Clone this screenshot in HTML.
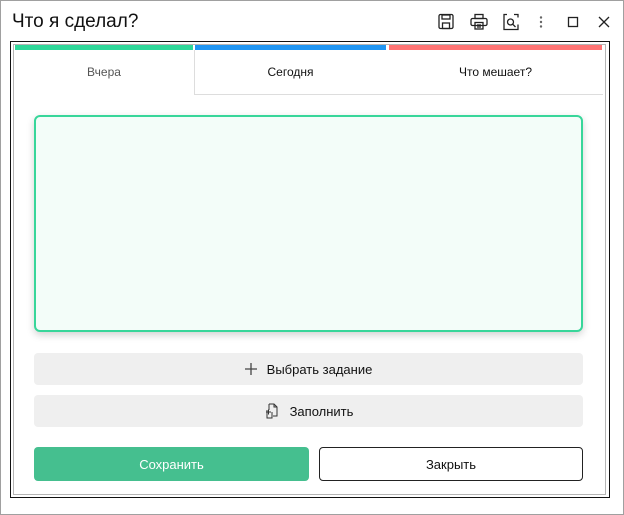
<!DOCTYPE html>
<html><head><meta charset="utf-8"><style>
*{box-sizing:border-box;margin:0;padding:0}
body{width:624px;height:515px;background:#fff;font-family:"Liberation Sans","DejaVu Sans",sans-serif;position:relative;overflow:hidden}
.abs{position:absolute}
.win{left:0;top:0;width:624px;height:515px;border:1px solid #a0a0a0}
.title{left:12px;top:11px;font-size:19px;color:#111}
.outer{left:10px;top:41px;width:600px;height:457px;border:1px solid #111}
.inner{left:13px;top:44px;width:593px;height:451px;border:1px solid #b5b5b5}
.bar{top:45px;height:5px}
.tab{top:50px;height:44px;font-size:12px;display:flex;align-items:center;justify-content:center;color:#111}
.ta{left:34px;top:115px;width:549px;height:217px;border:2px solid #38d69a;border-radius:6px;background:#f3fdf9;box-shadow:0 3px 8px rgba(0,0,0,.18)}
.btn{left:34px;width:549px;height:32px;background:#efefef;border-radius:4px;font-size:13px;display:flex;align-items:center;justify-content:center;color:#111}
.b2{top:447px;height:34px;border-radius:4px;font-size:13px;display:flex;align-items:center;justify-content:center}
</style></head><body>
<div class="abs win"></div>
<div class="abs title">Что я сделал?</div>
<svg class="abs" style="left:436px;top:11px" width="180" height="22" viewBox="0 0 180 22" fill="none" stroke="#222" stroke-width="1.3">
<rect x="3" y="3.5" width="14" height="14" rx="1.5"/><rect x="6" y="4" width="8" height="4"/><rect x="6.5" y="12" width="7" height="5.5"/>
<rect x="39" y="3.5" width="8" height="4"/><rect x="35" y="7.5" width="16" height="7" rx="1.5"/><rect x="39" y="11.5" width="8" height="6.5"/><line x1="41" y1="14" x2="45" y2="14"/><line x1="41" y1="16" x2="45" y2="16"/>
<path d="M71 3.5h-3v15h14v-5M78 3.5h4v3"/><circle cx="74.5" cy="11" r="3"/><line x1="76.7" y1="13.2" x2="79.5" y2="16"/>
<g fill="#666" stroke="none"><circle cx="105" cy="6.5" r="1.2"/><circle cx="105" cy="11" r="1.2"/><circle cx="105" cy="15.5" r="1.2"/></g>
<rect x="132.5" y="6.5" width="9" height="9"/>
<path d="M163 6l10 10M173 6l-10 10"/>
</svg>
<div class="abs outer"></div>
<div class="abs inner"></div>
<div class="abs bar" style="left:15px;width:178px;background:#2fd89a"></div>
<div class="abs bar" style="left:195px;width:191px;background:#2196f3"></div>
<div class="abs bar" style="left:389px;width:213px;background:#ff7474"></div>
<div class="abs" style="left:194px;top:50px;width:1px;height:45px;background:#ddd"></div>
<div class="abs" style="left:194px;top:94px;width:409px;height:1px;background:#ddd"></div>
<div class="abs tab" style="left:15px;width:178px;color:#555">Вчера</div>
<div class="abs tab" style="left:195px;width:191px">Сегодня</div>
<div class="abs tab" style="left:389px;width:213px">Что мешает?</div>
<div class="abs ta"></div>
<div class="abs btn" style="top:353px"><svg width="12" height="12" viewBox="0 0 12 12" stroke="#444" stroke-width="1.3" style="margin-right:10px"><path d="M6 0v12M0 6h12"/></svg>Выбрать задание</div>
<div class="abs btn" style="top:395px"><svg width="16" height="18" viewBox="0 0 16 18" fill="none" stroke="#333" stroke-width="1" style="margin-right:10px"><path d="M5 2h5l3 3v9H9M5 2v6M10 2v3h3"/><path d="M2 10h5M4.5 7.5v5M3 8v8h5v-6"/></svg>Заполнить</div>
<div class="abs b2" style="left:34px;width:275px;background:#45bf8f;color:#fff">Сохранить</div>
<div class="abs b2" style="left:319px;width:264px;border:1px solid #222;color:#111">Закрыть</div>
</body></html>
